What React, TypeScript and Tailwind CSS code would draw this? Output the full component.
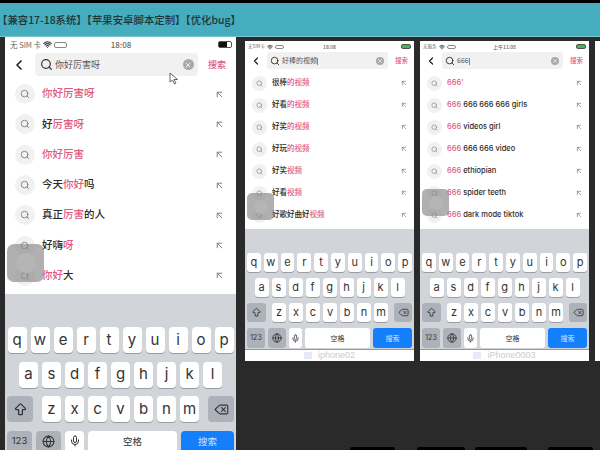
import React from 'react';
import { ChevronLeft, Search, X, Mic, Globe, Delete, ArrowBigUp, ArrowUpLeft, Wifi } from 'lucide-react';

type Row = { parts: [string, boolean][] };

const red = 'text-[#df5a7f]';

const leftRows: Row[] = [
  { parts: [['你好厉害呀', true]] },
  { parts: [['好', false], ['厉害呀', true]] },
  { parts: [['你好厉害', true]] },
  { parts: [['今天', false], ['你好', true], ['吗', false]] },
  { parts: [['真正', false], ['厉害', true], ['的人', false]] },
  { parts: [['好嗨', false], ['呀', true]] },
  { parts: [['你好', true], ['大', false]] },
];

const midRows: Row[] = [
  { parts: [['很棒', false], ['的视频', true]] },
  { parts: [['好看', false], ['的视频', true]] },
  { parts: [['好笑', false], ['的视频', true]] },
  { parts: [['好玩', false], ['的视频', true]] },
  { parts: [['好笑', false], ['视频', true]] },
  { parts: [['好看', false], ['视频', true]] },
  { parts: [['好歌好曲好', false], ['视频', true]] },
];

const rightRows: Row[] = [
  { parts: [["666'", true]] },
  { parts: [['666', true], [' 666 666 666 girls', false]] },
  { parts: [['666', true], [' videos girl', false]] },
  { parts: [['666', true], [' 666 666 video', false]] },
  { parts: [['666', true], [' ethiopian', false]] },
  { parts: [['666', true], [' spider teeth', false]] },
  { parts: [['666', true], [' dark mode tiktok', false]] },
];

const Key = ({ k, big }: { k: string; big: boolean }) => (
  <div className={`flex items-center justify-center bg-white shadow-[0_1px_0_#9a9da3] ${big ? 'w-[19px] h-[26px] rounded-[4px] text-[15px]' : 'w-[14px] h-[19px] rounded-[3px] text-[11px]'}`}>
    {k}
  </div>
);

const Keyboard = ({ big }: { big: boolean }) => {
  const gap = big ? 'gap-[4px]' : 'gap-[3px]';
  const grey = 'flex items-center justify-center bg-[#adb1ba]';
  return (
    <div className={`flex-1 min-h-0 bg-[#d1d5d9] text-[#333] font-['Inter','Liberation_Sans',sans-serif] flex flex-col ${big ? 'pt-[33px] gap-[8.5px] px-[2px]' : 'pt-[24px] pb-[1px] gap-[6px] px-[2px]'}`}>
      <div className={`flex justify-center shrink-0 ${gap}`}>
        {'qwertyuiop'.split('').map((k) => <Key key={k} k={k} big={big} />)}
      </div>
      <div className={`flex justify-center shrink-0 ${gap}`}>
        {'asdfghjkl'.split('').map((k) => <Key key={k} k={k} big={big} />)}
      </div>
      <div className="flex justify-between items-center shrink-0">
        <div className={`${grey} ${big ? 'w-[26px] h-[26px] rounded-[4px]' : 'w-[19px] h-[19px] rounded-[3px]'}`}>
          <ArrowBigUp className={big ? 'w-[15px] h-[15px]' : 'w-[11px] h-[11px]'} strokeWidth={2} />
        </div>
        <div className={`flex ${gap}`}>
          {'zxcvbnm'.split('').map((k) => <Key key={k} k={k} big={big} />)}
        </div>
        <div className={`${grey} ${big ? 'w-[26px] h-[26px] rounded-[4px]' : 'w-[18px] h-[19px] rounded-[3px]'}`}>
          <Delete className={big ? 'w-[15px] h-[15px]' : 'w-[11px] h-[11px]'} strokeWidth={1.8} />
        </div>
      </div>
      <div className={`flex shrink-0 ${big ? 'gap-[4px]' : 'gap-[3px]'}`}>
        <div className={`${grey} ${big ? 'w-[25px] h-[21px] rounded-t-[4px] text-[9.5px]' : 'w-[18px] h-[20px] rounded-[3px] text-[7px]'}`}>123</div>
        <div className={`${grey} ${big ? 'w-[25px] h-[21px] rounded-t-[4px]' : 'w-[18px] h-[20px] rounded-[3px]'}`}>
          <Globe className={big ? 'w-[13px] h-[13px]' : 'w-[10px] h-[10px]'} />
        </div>
        <div className={`flex items-center justify-center bg-white ${big ? 'w-[19px] h-[21px] rounded-t-[4px]' : 'w-[13px] h-[20px] rounded-[3px]'}`}>
          <Mic className={big ? 'w-[12px] h-[12px]' : 'w-[9px] h-[9px]'} />
        </div>
        <div className={`flex flex-1 items-center justify-center bg-white font-['Noto_Sans_CJK_SC',sans-serif] ${big ? 'h-[21px] rounded-t-[4px] text-[9.5px]' : 'h-[20px] rounded-[3px] text-[7px]'}`}>空格</div>
        <div className={`flex items-center justify-center bg-[#157efb] text-[#cfe4ff] font-['Noto_Sans_CJK_SC',sans-serif] ${big ? 'w-[53px] h-[21px] rounded-t-[4px] text-[9.5px]' : 'w-[39px] h-[20px] rounded-[3px] text-[7px]'}`}>搜索</div>
      </div>
    </div>
  );
};

const StatusBar = ({ big, carrier, time }: { big: boolean; carrier: string; time: string }) => (
  <div className={`flex shrink-0 items-center justify-between text-[#666] ${big ? 'h-[15px] pl-[5px] pr-[4px] text-[7.5px]' : 'h-[11px] px-[3px] text-[4.5px]'}`}>
    <div className="flex items-center gap-[2px] w-1/3">
      <span className="whitespace-pre">{carrier}</span>
      <Wifi className={`text-[#333] ${big ? 'w-[9px] h-[9px]' : 'w-[6px] h-[6px]'}`} strokeWidth={3} />
      <span className={`border border-[#888] rounded-[2px] ${big ? 'w-[13px] h-[6px]' : 'w-[9px] h-[4px]'}`} />
    </div>
    <span className={`font-medium ${big ? 'text-[8px]' : 'text-[5px]'}`}>{time}</span>
    <div className="flex justify-end w-1/3">
      <div className={`border border-[#555] rounded-[2px] flex ${big ? 'w-[14px] h-[7px] mr-[0px]' : 'w-[10px] h-[5px] bg-[#3fb950]'}`}>
        {big && <div className="w-[8px] bg-[#111]" />}
      </div>
    </div>
  </div>
);

const Phone = ({ big, query, rows, carrier, time, caret }: { big: boolean; query: string; rows: Row[]; carrier: string; time: string; caret: boolean }) => (
  <div className={`bg-white flex flex-col shrink-0 ${big ? 'w-[231px] h-[413px]' : 'w-[169px] h-[308px]'}`}>
    <StatusBar big={big} carrier={carrier} time={time} />
    <div className={`flex shrink-0 items-center ${big ? 'h-[23px] mt-[1px] pl-[6px] pr-[10px]' : 'h-[17px] pl-[5px] pr-[6px]'}`}>
      <ChevronLeft className={`text-[#222] ${big ? 'w-[16px] h-[16px]' : 'w-[12px] h-[12px]'}`} strokeWidth={2.5} />
      <div className={`flex-1 flex items-center bg-[#f1f1f1] ${big ? 'h-[23px] ml-[8px] rounded-[4px] pl-[5px] pr-[4px]' : 'h-[17px] ml-[5px] rounded-[3px] pl-[3px] pr-[4px]'}`}>
        <Search className={`text-[#333] ${big ? 'w-[13px] h-[13px]' : 'w-[10px] h-[10px]'}`} strokeWidth={2.2} />
        <span className={`flex-1 text-[#555] ${big ? 'ml-[2px] text-[9px]' : 'ml-[2px] text-[7px]'}`}>
          {query}
          {caret && <span className="inline-block w-[1px] h-[7px] bg-[#df5a7f] align-middle" />}
        </span>
        <div className={`flex items-center justify-center rounded-full bg-[#a9a9a9] ${big ? 'w-[11px] h-[11px]' : 'w-[8px] h-[8px]'}`}>
          <X className={big ? 'w-[8px] h-[8px] text-[#eee]' : 'w-[6px] h-[6px] text-[#eee]'} strokeWidth={3} />
        </div>
      </div>
      <span className={`${red} font-medium ${big ? 'ml-[10px] text-[9px]' : 'ml-[7px] text-[6.5px]'}`}>搜索</span>
    </div>
    <div className={`flex flex-col shrink-0 ${big ? 'pt-[3px] pb-[3px]' : 'pt-[3px] pb-[3px]'}`}>
      {rows.map((row, i) => (
        <div key={i} className={`flex items-center ${big ? 'h-[30.3px] pl-[10px] pr-[11px]' : 'h-[22px] pl-[7px] pr-[6px]'}`}>
          <div className={`flex items-center justify-center rounded-full bg-[#f1f1f1] ${big ? 'w-[20px] h-[20px]' : 'w-[15px] h-[15px]'}`}>
            <Search className={`text-[#777] ${big ? 'w-[10px] h-[10px]' : 'w-[7px] h-[7px]'}`} strokeWidth={2} />
          </div>
          <span className={`flex-1 font-medium whitespace-pre text-[#2b2b2b] font-['Inter','Noto_Sans_CJK_SC',sans-serif] ${big ? 'ml-[7px] text-[10.5px]' : 'ml-[5px] text-[7.5px]'}`}>
            {row.parts.map(([t, hit], j) => <span key={j} className={hit ? red : ''}>{t}</span>)}
          </span>
          <ArrowUpLeft className={`text-[#777] ${big ? 'w-[11px] h-[11px]' : 'w-[8px] h-[8px]'}`} strokeWidth={2} />
        </div>
      ))}
    </div>
    <Keyboard big={big} />
  </div>
);

const SmallPhone = ({ label, query, rows, carrier, time, overlayTop }: { label: string; query: string; rows: Row[]; carrier: string; time: string; overlayTop: string }) => (
  <div className="relative flex flex-col w-[169px] shrink-0">
    <Phone big={false} query={query} rows={rows} carrier={carrier} time={time} caret />
    <div className="h-[12px] bg-white border-t border-[#7fa67f] flex items-center justify-center gap-[6px] text-[9px] text-[#c9ccd2] font-['Liberation_Sans',sans-serif]">
      <span className="w-[8px] h-[7px] bg-[#e6eaf5]" />
      <span>{label}</span>
    </div>
    <div className={`absolute left-[2px] w-[27px] h-[27px] rounded-[5px] bg-[#8f8f8f]/70 blur-[0.5px] flex items-center justify-center ${overlayTop}`}>
      <div className="rounded-full bg-[#b5b5b5] w-[14px] h-[14px]" />
    </div>
  </div>
);

export default function App() {
  return (
    <div className="w-[600px] h-[450px] relative overflow-hidden bg-[#2a2a2a] font-['Noto_Sans_CJK_SC','Liberation_Sans',sans-serif]">
      <div className="h-[3px] bg-black" />
      <div className="h-[34px] bg-[#45adbd] border-b border-[#7cc5d0] flex items-center text-[10.4px] font-medium text-[#22343a] whitespace-pre">
        <span className="-ml-[3px]">【兼容17-18系统】【苹果安卓脚本定制】【优化bug】</span>
      </div>
      <div className="flex items-start pl-[5px]">
        <div className="relative shrink-0">
          <Phone big query="你好厉害呀" rows={leftRows} carrier="无 SIM 卡" time="18:08" caret={false} />
          <div className="absolute left-[2px] top-[207px] w-[37px] h-[38px] rounded-[7px] bg-[#8f8f8f]/70 blur-[0.5px] flex items-center justify-center">
            <div className="rounded-full bg-[#b5b5b5] w-[20px] h-[20px]" />
          </div>
          <svg className="absolute left-[164px] top-[35px]" width="10" height="13" viewBox="0 0 10 13">
            <path d="M1 1 L1 10 L3.5 8 L5.5 12 L7 11 L5 7.5 L8.5 7.5 Z" fill="#fff" stroke="#555" strokeWidth="0.9" />
          </svg>
        </div>
        <div className="ml-[9px] mt-[4px] shrink-0">
          <SmallPhone label="iphone02" query="好棒的视频" rows={midRows} carrier="无SIM卡" time="18:08" overlayTop="top-[152px]" />
        </div>
        <div className="ml-[6px] mt-[4px] shrink-0">
          <SmallPhone label="iPhone0003" query="666" rows={rightRows} carrier="无服务" time="上午11:08" overlayTop="top-[148px]" />
        </div>
        <div className="ml-[6px] mt-[4px] w-[10px] h-[320px] bg-white shrink-0" />
      </div>
      <div className="absolute left-[350px] top-[447px] w-[45px] h-[3px] bg-black rounded-t-[2px]" />
      <div className="absolute left-[417px] top-[447px] w-[48px] h-[3px] bg-black rounded-t-[2px]" />
      <div className="absolute left-[475px] top-[447px] w-[52px] h-[3px] bg-black rounded-t-[2px]" />
      <div className="absolute left-[548px] top-[447px] w-[45px] h-[3px] bg-black rounded-t-[2px]" />
    </div>
  );
}
